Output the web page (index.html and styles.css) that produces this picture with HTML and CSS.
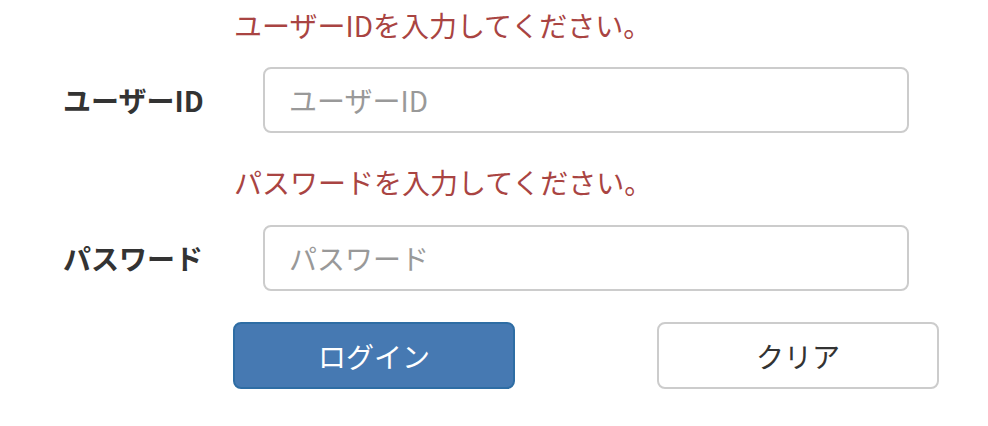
FILE: index.html
```html
<!DOCTYPE html>
<html lang="ja">
<head>
<meta charset="utf-8">
<link rel="stylesheet" href="styles.css">
</head>
<body>
<form class="login-form">
  <div class="error">ユーザーIDを入力してください。</div>
  <div class="field">
    <label class="field-label" for="uid">ユーザーID</label>
    <input class="field-input" id="uid" type="text" placeholder="ユーザーID">
  </div>
  <div class="error error-second">パスワードを入力してください。</div>
  <div class="field field-second">
    <label class="field-label" for="pw">パスワード</label>
    <input class="field-input" id="pw" type="password" placeholder="パスワード">
  </div>
  <div class="actions">
    <button type="button" class="btn btn-primary">ログイン</button>
    <button type="button" class="btn btn-default">クリア</button>
  </div>
</form>
</body>
</html>
```
FILE: styles.css
```css
html, body {
  margin: 0;
  padding: 0;
  background: #ffffff;
}
body {
  font-family: "Noto Sans CJK JP", "Noto Sans", sans-serif;
  font-size: 28px;
  color: #333333;
}
.login-form {
  display: flex;
  flex-direction: column;
  width: 940px;
}
.error {
  margin-left: 234px;
  height: 50px;
  line-height: 50px;
  color: #a94442;
}
.error-second {
  margin-top: 24px;
}
.field {
  display: flex;
  align-items: center;
  margin-top: 17px;
  padding-left: 63px;
}
.field-second {
  margin-top: 18px;
}
.field-label {
  width: 200px;
  font-weight: bold;
  color: #333333;
}
.field-input {
  box-sizing: border-box;
  width: 646px;
  height: 66px;
  padding: 0 24px;
  border: 2px solid #cccccc;
  border-radius: 8px;
  font-family: inherit;
  font-size: 28px;
  color: #555555;
  outline: none;
}
.field-input::placeholder {
  color: #999999;
}
.actions {
  display: flex;
  gap: 142px;
  margin-top: 31px;
  margin-left: 233px;
}
.btn {
  box-sizing: border-box;
  width: 282px;
  height: 67px;
  border-radius: 8px;
  font-family: inherit;
  font-size: 28px;
  cursor: pointer;
}
.btn-primary {
  background: #4679b2;
  border: 2px solid #2e6da4;
  color: #ffffff;
}
.btn-default {
  background: #ffffff;
  border: 2px solid #cccccc;
  color: #333333;
}
```
